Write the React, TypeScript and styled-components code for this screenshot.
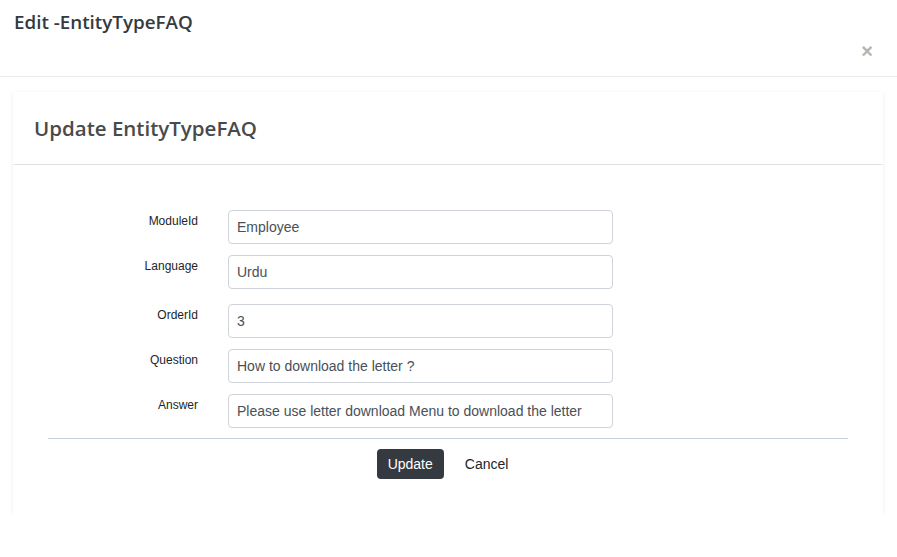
import React, { FC } from "react";
import styled, { createGlobalStyle } from "styled-components";

const GlobalStyle = createGlobalStyle`
  body {
    margin: 0;
    background: #fff;
    font-family: "Liberation Sans", Arial, sans-serif;
  }
`;

const Header = styled.header`
  height: 76px;
  border-bottom: 1px solid #e9ecef;
  display: flex;
  justify-content: space-between;
  padding: 0 24px 0 14px;
`;

const PageTitle = styled.h1`
  margin: 10px 0 0;
  font-family: "Open Sans", sans-serif;
  font-weight: 600;
  font-size: 18.8px;
  line-height: 24px;
  color: #343a40;
`;

const Close = styled.span`
  margin-top: 39px;
  font-family: "Liberation Sans", Arial, sans-serif;
  font-weight: bold;
  font-size: 20px;
  line-height: 24px;
  color: #b4b4b4;
`;

const Card = styled.section`
  margin: 15px 14px 0 13px;
  background: #fff;
  box-shadow: 0 1px 4px rgba(0, 0, 0, 0.08);
`;

const CardHeader = styled.div`
  height: 72px;
  border-bottom: 1px solid #dee2e6;
  display: flex;
  align-items: center;
  padding: 0 21px;
`;

const CardTitle = styled.h2`
  margin: 0;
  font-family: "Open Sans", sans-serif;
  font-weight: 600;
  font-size: 20.5px;
  color: #4a4a4a;
`;

const CardBody = styled.div`
  padding: 45px 35px 35px;
`;

const Form = styled.div`
  display: grid;
  grid-template-columns: 150px 385px;
  column-gap: 30px;
`;

const Label = styled.label<{ $gap: number }>`
  justify-self: end;
  margin-top: ${p => p.$gap + 5}px;
  font-size: 12px;
  line-height: 12px;
  color: #212529;
`;

const Input = styled.input<{ $gap: number }>`
  box-sizing: border-box;
  margin-top: ${p => p.$gap}px;
  height: 34px;
  width: 385px;
  padding: 0 8px;
  border: 1px solid #ced4da;
  border-radius: 4px;
  font-family: "Liberation Sans", Arial, sans-serif;
  font-size: 14px;
  color: #495057;
  background: #fff;
`;

const Divider = styled.hr`
  margin: 10px 0 0;
  border: 0;
  border-top: 1px solid #c9d1d9;
`;

const Actions = styled.div`
  display: flex;
  justify-content: center;
  align-items: center;
  gap: 21px;
  margin-top: 10px;
  padding-right: 11px;
`;

const Button = styled.button`
  height: 30px;
  padding: 0 11px;
  border: 0;
  border-radius: 4px;
  background: #343a40;
  color: #fff;
  font-family: "Liberation Sans", Arial, sans-serif;
  font-size: 14px;
`;

const LinkButton = styled.button`
  border: 0;
  background: none;
  padding: 0;
  color: #212529;
  font-family: "Liberation Sans", Arial, sans-serif;
  font-size: 14px;
`;

const fields = [
  { label: "ModuleId", value: "Employee", gap: 0 },
  { label: "Language", value: "Urdu", gap: 11 },
  { label: "OrderId", value: "3", gap: 15 },
  { label: "Question", value: "How to download the letter ?", gap: 11 },
  {
    label: "Answer",
    value: "Please use letter download Menu to download the letter",
    gap: 11
  }
];

const App: FC = () => {
  return (
    <>
      <GlobalStyle />
      <Header>
        <PageTitle>Edit -EntityTypeFAQ</PageTitle>
        <Close>×</Close>
      </Header>
      <Card>
        <CardHeader>
          <CardTitle>Update EntityTypeFAQ</CardTitle>
        </CardHeader>
        <CardBody>
          <Form>
            {fields.map(f => (
              <React.Fragment key={f.label}>
                <Label $gap={f.gap}>{f.label}</Label>
                <Input $gap={f.gap} defaultValue={f.value} />
              </React.Fragment>
            ))}
          </Form>
          <Divider />
          <Actions>
            <Button>Update</Button>
            <LinkButton>Cancel</LinkButton>
          </Actions>
        </CardBody>
      </Card>
    </>
  );
};

export default App;
